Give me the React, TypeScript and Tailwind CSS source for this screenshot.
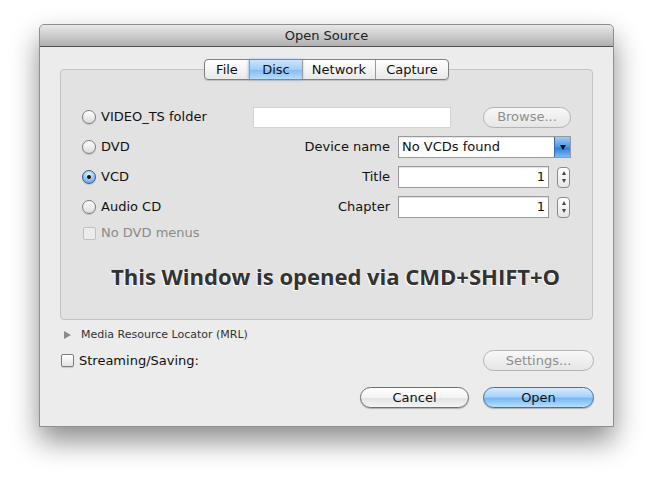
import React from "react"

const ui = { fontFamily: '"DejaVu Sans", "Liberation Sans", sans-serif' }

const Radio = ({ checked }: { checked?: boolean }) => (
    <span
        className={
            "relative size-[14px] rounded-full border flex items-center justify-center shadow-[0_1px_1px_rgba(0,0,0,0.15)] " +
            (checked
                ? "border-[#3b5f8c] bg-[radial-gradient(circle_at_50%_30%,#e4f2ff_0%,#8cc3f2_55%,#4d90d8_100%)]"
                : "border-[#7d7d7d] bg-[linear-gradient(#ffffff,#dcdcdc)]")
        }
    >
        {checked && <span className="size-[4px] rounded-full bg-[#111]" />}
    </span>
)

const Check = ({ disabled }: { disabled?: boolean }) => (
    <span
        className={
            "size-[13px] rounded-[2px] border " +
            (disabled ? "border-[#c0c0c0] bg-[#ececec]" : "border-[#7d7d7d] bg-[linear-gradient(#ffffff,#e3e3e3)] shadow-[0_1px_1px_rgba(0,0,0,0.15)]")
        }
    />
)

const Stepper = () => (
    <div className="w-[13px] h-[21px] rounded-[4px] border border-[#8a8a8a] bg-[linear-gradient(#ffffff,#e6e6e6)] flex flex-col items-center justify-center gap-[4px]">
        <span className="w-0 h-0 border-x-[2.5px] border-x-transparent border-b-[4px] border-b-[#444]" />
        <span className="w-0 h-0 border-x-[2.5px] border-x-transparent border-t-[4px] border-t-[#444]" />
    </div>
)

const Button = ({ label, w, disabled, primary }: { label: string; w: string; disabled?: boolean; primary?: boolean }) => (
    <div
        className={
            w +
            " h-[21px] rounded-full border flex items-center justify-center text-[13px] " +
            (primary
                ? "border-[#4a6f9e] text-[#111] bg-[linear-gradient(#d6ebfd_0%,#a7d2f9_45%,#79b8f2_55%,#b6e0fe_100%)] shadow-[0_1px_1px_rgba(0,0,0,0.25)]"
                : disabled
                    ? "border-[#b4b4b4] text-[#8e8e8e] bg-[linear-gradient(#f8f8f8,#e6e6e6)]"
                    : "border-[#6f6f6f] text-[#111] bg-[linear-gradient(#ffffff_0%,#f3f3f3_50%,#e4e4e4_55%,#f4f4f4_100%)] shadow-[0_1px_1px_rgba(0,0,0,0.25)]")
        }
    >
        {label}
    </div>
)

const tabs = ["File", "Disc", "Network", "Capture"]

export default function App() {
    return (
        <div className="w-[654px] h-[482px] bg-white pt-[24px] pl-[39px] text-[#111]" style={ui}>
            <div className="w-[575px] h-[403px] bg-[#ececec] border border-[#8f8f8f] rounded-t-[5px] shadow-[0_14px_28px_rgba(0,0,0,0.45)] flex flex-col">
                <div className="h-[22px] rounded-t-[5px] bg-[linear-gradient(#e8e8e8,#b0b0b0)] border-b border-[#4f4f4f] flex items-center justify-center text-[13px] text-[#222]">
                    Open Source
                </div>

                <div className="relative mt-[22px] ml-[20px] w-[533px] h-[251px] rounded-[4px] border border-[#c4c4c4] bg-[#e2e2e2] pt-[32px] pl-[21px] flex flex-col text-[13px]">
                    <div className="absolute -top-[11px] left-0 right-0 flex justify-center">
                        <div className="flex h-[21px] rounded-[4px] border border-[#808080] bg-[linear-gradient(#ffffff,#e9e9e9)] shadow-[0_1px_1px_rgba(0,0,0,0.15)]">
                            {tabs.map((t, i) => (
                                <div
                                    key={t}
                                    className={
                                        "flex items-center justify-center " +
                                        (i > 0 ? "border-l border-[#9a9a9a] " : "") +
                                        (t === "File" ? "w-[44px]" : t === "Disc" ? "w-[53px]" : "w-[73px]") +
                                        (t === "Disc"
                                            ? " bg-[linear-gradient(#cde5fb,#a3cdf5_50%,#86bdf0_55%,#b5dcfb)] shadow-[0_0_3px_#5c9ee8] border-[#5f86b5]"
                                            : "")
                                    }
                                >
                                    {t}
                                </div>
                            ))}
                        </div>
                    </div>

                    <div className="h-[30px] flex items-center">
                        <div className="w-[171px] flex items-center gap-[5px]">
                            <Radio />
                            <span>VIDEO_TS folder</span>
                        </div>
                        <div className="w-[198px] h-[21px] bg-white border border-[#d4d4d4]" />
                        <div className="ml-[32px]">
                            <Button label="Browse..." w="w-[88px]" disabled />
                        </div>
                    </div>

                    <div className="h-[30px] flex items-center">
                        <div className="w-[171px] flex items-center gap-[5px]">
                            <Radio />
                            <span>DVD</span>
                        </div>
                        <div className="w-[137px] text-right">Device name</div>
                        <div className="ml-[8px] w-[173px] h-[22px] flex bg-white border border-[#9a9a9a] shadow-[inset_0_1px_1px_rgba(0,0,0,0.1)]">
                            <div className="flex-1 flex items-center pl-[3px] text-[13px]">No VCDs found</div>
                            <div className="w-[16px] h-full bg-[linear-gradient(#9ccbf6,#4f97e3_50%,#2d7fdd_55%,#7dbbf3)] border-l border-[#3f6ca8] flex items-center justify-center">
                                <span className="w-0 h-0 border-x-[3px] border-x-transparent border-t-[5px] border-t-[#111]" />
                            </div>
                        </div>
                    </div>

                    {["Title", "Chapter"].map((label, i) => (
                        <div key={label} className="h-[30px] flex items-center">
                            <div className="w-[171px] flex items-center gap-[5px]">
                                <Radio checked={i === 0} />
                                <span>{i === 0 ? "VCD" : "Audio CD"}</span>
                            </div>
                            <div className="w-[137px] text-right">{label}</div>
                            <div className="ml-[8px] w-[151px] h-[22px] bg-white border border-[#9a9a9a] shadow-[inset_0_1px_1px_rgba(0,0,0,0.12)] flex items-center justify-end pr-[3px]">
                                1
                            </div>
                            <div className="ml-[8px]">
                                <Stepper />
                            </div>
                        </div>
                    ))}

                    <div className="h-[22px] flex items-center gap-[5px] pl-[1px] text-[#8a8a8a]">
                        <Check disabled />
                        <span>No DVD menus</span>
                    </div>

                    <div
                        className="mt-[16px] ml-[29px] text-[22px] font-bold text-[#333] [text-shadow:-1px_1px_0_#fff] whitespace-nowrap"
                        style={{ fontFamily: '"Open Sans", "DejaVu Sans", sans-serif' }}
                    >
                        This Window is opened via CMD+SHIFT+O
                    </div>
                </div>

                <div className="mt-[8px] ml-[24px] h-[14px] flex items-center gap-[10px] text-[11px] text-[#333]">
                    <span className="w-0 h-0 border-y-[4px] border-y-transparent border-l-[7px] border-l-[#8a8a8a]" />
                    <span>Media Resource Locator (MRL)</span>
                </div>

                <div className="mt-[7px] ml-[21px] mr-[19px] h-[23px] flex items-center text-[13px]">
                    <Check />
                    <span className="ml-[5px]">Streaming/Saving:</span>
                    <div className="ml-auto">
                        <Button label="Settings..." w="w-[111px]" disabled />
                    </div>
                </div>

                <div className="mt-[15px] mr-[19px] flex justify-end gap-[14px]">
                    <Button label="Cancel" w="w-[109px]" />
                    <Button label="Open" w="w-[111px]" primary />
                </div>
            </div>
        </div>
    )
}
